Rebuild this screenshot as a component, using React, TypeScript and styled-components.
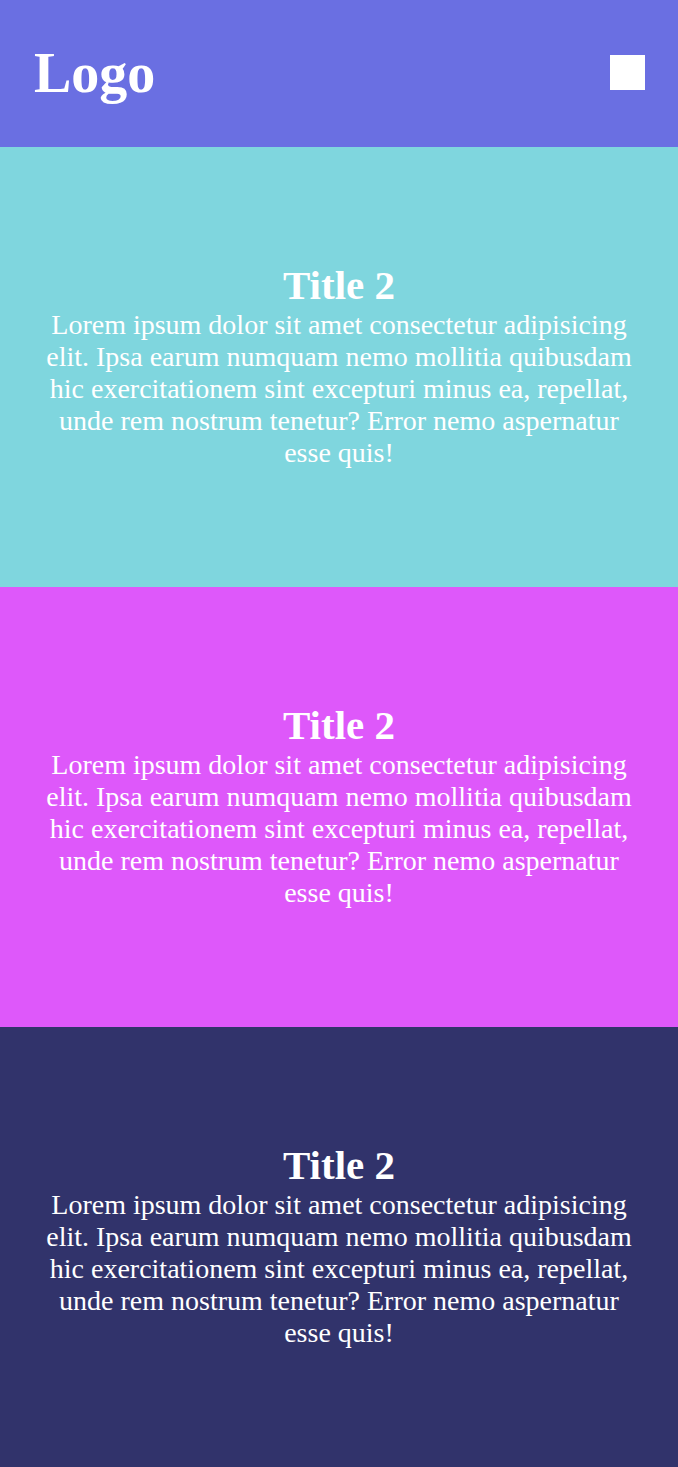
import React from "react";
import styled, { createGlobalStyle } from "styled-components";

const Global = createGlobalStyle`
  html, body { margin: 0; padding: 0; }
  body { font-family: "Liberation Serif", "Times New Roman", serif; }
`;

const Header = styled.header`
  height: 147px;
  background: #6a6fe2;
  display: flex;
  align-items: center;
  justify-content: space-between;
  padding: 0 33px 0 34px;
  box-sizing: border-box;
`;

const Logo = styled.div`
  color: #fff;
  font-weight: 700;
  font-size: 56px;
  line-height: 1;
  margin-top: -2px;
`;

const MenuBox = styled.div`
  width: 35px;
  height: 35px;
  background: #fff;
  margin-top: -2px;
`;

const Section = styled.section<{ $bg: string }>`
  height: 440px;
  background: ${(p) => p.$bg};
  display: flex;
  flex-direction: column;
  align-items: center;
  justify-content: center;
  text-align: center;
  color: #fff;
  padding: 0 44px 4px;
  box-sizing: border-box;
`;

const Title = styled.h2`
  margin: 0;
  font-size: 41px;
  font-weight: 700;
  line-height: normal;
`;

const Body = styled.p`
  margin: 0;
  font-size: 28px;
  line-height: 32px;
`;

const text =
  "Lorem ipsum dolor sit amet consectetur adipisicing elit. Ipsa earum numquam nemo mollitia quibusdam hic exercitationem sint excepturi minus ea, repellat, unde rem nostrum tenetur? Error nemo aspernatur esse quis!";

const sections = ["#7fd6de", "#de58fa", "#31336b"];

export default function App() {
  return (
    <>
      <Global />
      <Header>
        <Logo>Logo</Logo>
        <MenuBox />
      </Header>
      {sections.map((bg) => (
        <Section key={bg} $bg={bg}>
          <Title>Title 2</Title>
          <Body>{text}</Body>
        </Section>
      ))}
    </>
  );
}
